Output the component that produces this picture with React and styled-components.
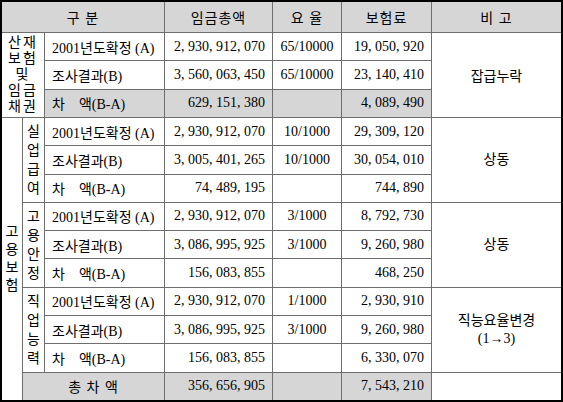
import React from 'react';
import styled, { createGlobalStyle } from 'styled-components';

// ---- page defaults
const GlobalStyle = createGlobalStyle`
  html, body {
    margin: 0;
    padding: 0;
    background: #fff;
  }
  body {
    font-family: "Liberation Serif", "Noto Sans CJK KR", serif;
  }
`;

// ---- table data
const sections = [
  {
    name: ['실', '업', '급', '여'],
    note: ['상동'],
    rows: [
      ['2001년도확정 (A)', '2, 930, 912, 070', '10/1000', '29, 309, 120'],
      ['조사결과(B)', '3, 005, 401, 265', '10/1000', '30, 054, 010'],
      ['차\u3000액(B-A)', '74, 489, 195', '', '744, 890'],
    ],
  },
  {
    name: ['고', '용', '안', '정'],
    note: ['상동'],
    rows: [
      ['2001년도확정 (A)', '2, 930, 912, 070', '3/1000', '8, 792, 730'],
      ['조사결과(B)', '3, 086, 995, 925', '3/1000', '9, 260, 980'],
      ['차\u3000액(B-A)', '156, 083, 855', '', '468, 250'],
    ],
  },
  {
    name: ['직', '업', '능', '력'],
    note: ['직능요율변경', '(1→3)'],
    rows: [
      ['2001년도확정 (A)', '2, 930, 912, 070', '1/1000', '2, 930, 910'],
      ['조사결과(B)', '3, 086, 995, 925', '3/1000', '9, 260, 980'],
      ['차\u3000액(B-A)', '156, 083, 855', '', '6, 330, 070'],
    ],
  },
];

const sanjae = [
  ['2001년도확정 (A)', '2, 930, 912, 070', '65/10000', '19, 050, 920'],
  ['조사결과(B)', '3, 560, 063, 450', '65/10000', '23, 140, 410'],
  ['차\u3000액(B-A)', '629, 151, 380', '', '4, 089, 490'],
];

const Row = ({ row, shade }) => (
  <>
    <Cell $align="left" $shade={shade}>{row[0]}</Cell>
    <Cell $align="right" $shade={shade}>{row[1]}</Cell>
    <Cell $shade={shade}>{row[2]}</Cell>
    <Cell $align="right" $shade={shade}>{row[3]}</Cell>
  </>
);

const App = () => {
  return (
    <>
      <GlobalStyle />
      <Sheet>
        {/* header */}
        <Cell $cs={3} $shade $head>구 분</Cell>
        <Cell $shade $head>임금총액</Cell>
        <Cell $shade $head>요 율</Cell>
        <Cell $shade $head>보험료</Cell>
        <Cell $shade $head>비 고</Cell>

        {/* 산재보험 및 임금채권 */}
        {sanjae.map((row, i) => (
          <React.Fragment key={i}>
            {i === 0 && (
              <GroupCell $cs={2} $rs={3}>
                <Stack $lh={16} $ls={2}>
                  {['산재', '보험', '및', '임금', '채권'].map((t) => <span key={t}>{t}</span>)}
                </Stack>
              </GroupCell>
            )}
            <Row row={row} shade={i === 2} />
            {i === 0 && <Cell $rs={3}>잡급누락</Cell>}
          </React.Fragment>
        ))}

        {/* 고용보험 */}
        {sections.map((sec, s) => (
          <React.Fragment key={s}>
            {sec.rows.map((row, i) => (
              <React.Fragment key={i}>
                {s === 0 && i === 0 && (
                  <GroupCell $rs={10}>
                    <Stack $lh={18}>
                      {['고', '용', '보', '험'].map((t) => <span key={t}>{t}</span>)}
                    </Stack>
                  </GroupCell>
                )}
                {i === 0 && (
                  <GroupCell $rs={3}>
                    <Stack $lh={19}>
                      {sec.name.map((t) => <span key={t}>{t}</span>)}
                    </Stack>
                  </GroupCell>
                )}
                <Row row={row} />
                {i === 0 && (
                  <Cell $rs={3}>
                    <Stack $lh={18}>
                      {sec.note.map((t) => <span key={t}>{t}</span>)}
                    </Stack>
                  </Cell>
                )}
              </React.Fragment>
            ))}
          </React.Fragment>
        ))}

        {/* total */}
        <Cell $cs={2} $shade $head>총 차 액</Cell>
        <Cell $align="right" $shade>356, 656, 905</Cell>
        <Cell $shade />
        <Cell $align="right" $shade>7, 543, 210</Cell>
        <Cell />
      </Sheet>
    </>
  );
};

export default App;

// ------ UI component definition
const Sheet = styled.div`
  display: grid;
  grid-template-columns: 20px 21px 119px 107px 68px 89px 129px;
  grid-template-rows: 30px repeat(13, 1fr);
  gap: 1px;
  width: 563px;
  height: 402px;
  box-sizing: border-box;
  border: 2px solid #000;
  background: #6e6e6e;
  font-size: 14px;
  color: #000;
`;

const Cell = styled.div`
  grid-column: span ${(p) => p.$cs || 1};
  grid-row: span ${(p) => p.$rs || 1};
  display: flex;
  align-items: center;
  justify-content: ${(p) =>
    p.$align === 'left' ? 'flex-start' : p.$align === 'right' ? 'flex-end' : 'center'};
  padding: 0 7px;
  background: ${(p) => (p.$shade ? '#d6d6d6' : '#fff')};
  letter-spacing: ${(p) => (p.$head ? '1px' : '0')};
  white-space: nowrap;
  min-width: 0;
  overflow: hidden;
`;

const GroupCell = styled(Cell)`
  padding: 0;
`;

const Stack = styled.div`
  display: flex;
  flex-direction: column;
  align-items: center;
  line-height: ${(p) => p.$lh}px;
  letter-spacing: ${(p) => p.$ls || 0}px;
`;
